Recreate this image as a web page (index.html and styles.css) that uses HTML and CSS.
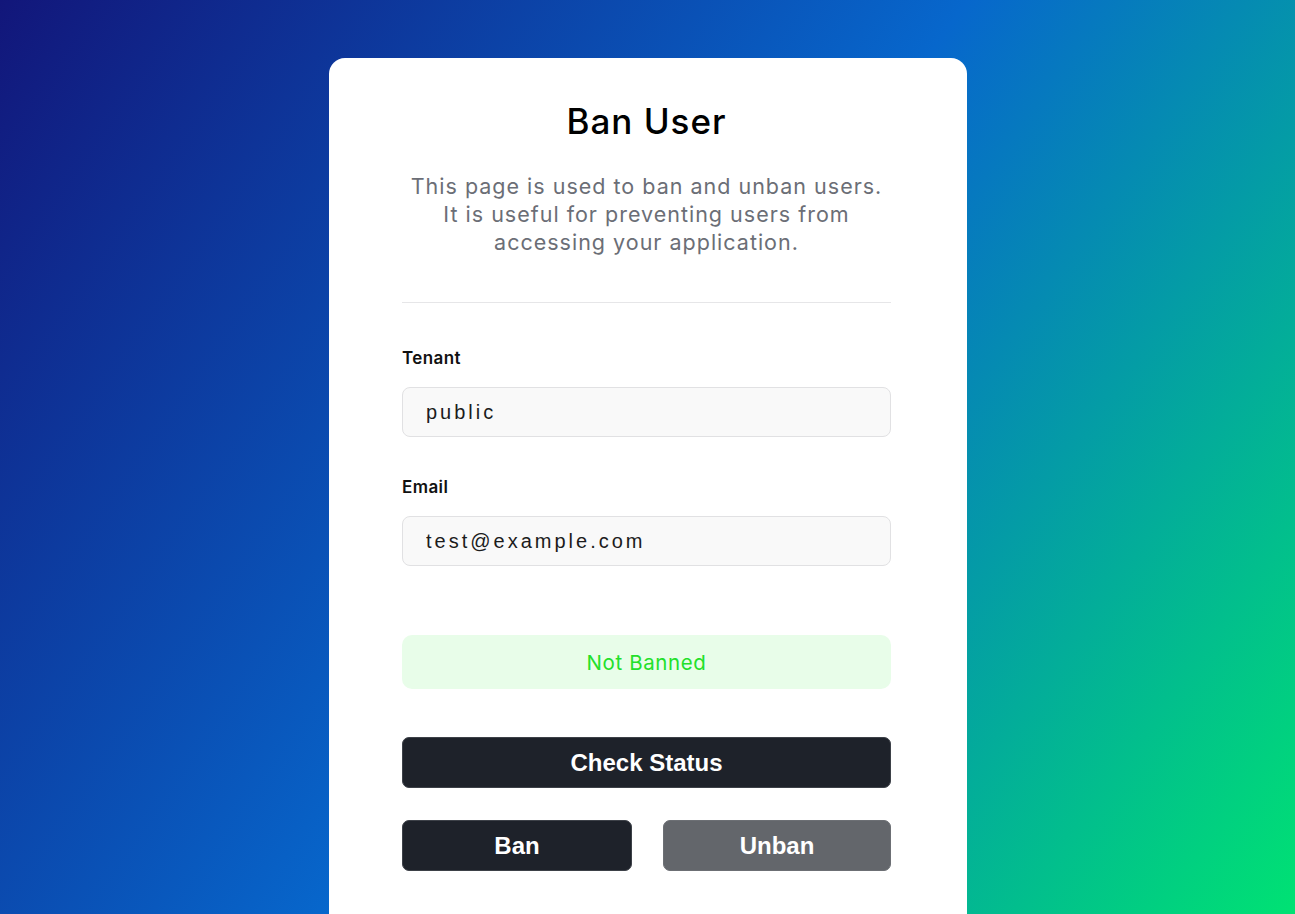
FILE: index.html
```html
<!DOCTYPE html>
<html lang="en">
<head>
<meta charset="utf-8">
<title>Ban User</title>
<link rel="stylesheet" href="styles.css">
</head>
<body>
<main class="page">
  <section class="card">
    <h1 class="title">Ban User</h1>
    <p class="desc">This page is used to ban and unban users.<br>It is useful for preventing users from<br>accessing your application.</p>
    <hr class="divider">
    <div class="field">
      <label class="label" for="tenant">Tenant</label>
      <input class="input" id="tenant" type="text" value="public">
    </div>
    <div class="field field-second">
      <label class="label" for="email">Email</label>
      <input class="input" id="email" type="text" value="test@example.com">
    </div>
    <div class="status">Not Banned</div>
    <button class="btn btn-dark btn-full">Check Status</button>
    <div class="actions">
      <button class="btn btn-dark">Ban</button>
      <button class="btn btn-gray">Unban</button>
    </div>
  </section>
</main>
</body>
</html>
```
FILE: styles.css
```css
* { box-sizing: border-box; }
html, body { margin: 0; height: 100%; }
body {
  background: linear-gradient(125deg, #12167a 0%, #0767cc 50%, #00e273 100%);
  font-family: "Inter", "Noto Sans", sans-serif;
  overflow: hidden;
}
.page {
  display: flex;
  justify-content: center;
  padding-top: 58px;
  padding-left: 1px;
}
.card {
  width: 638px;
  min-height: 900px;
  background: #fff;
  border-radius: 16px;
  padding: 43px 76px 0 73px;
  display: flex;
  flex-direction: column;
}
.title {
  margin: 0;
  font-size: 35px;
  line-height: 40px;
  letter-spacing: 1px;
  font-weight: 500;
  text-align: center;
  color: #000;
}
.desc {
  margin: 31px 0 0;
  font-size: 21.5px;
  line-height: 28px;
  letter-spacing: 1px;
  text-align: center;
  color: #6b6e76;
  font-weight: 400;
}
.divider {
  margin: 46px 0 0;
  border: 0;
  border-top: 1px solid #e6e6e8;
  height: 0;
}
.field {
  display: flex;
  flex-direction: column;
  margin-top: 45px;
}
.field-second { margin-top: 40px; }
.label {
  font-size: 17px;
  line-height: 20px;
  letter-spacing: 0.4px;
  font-weight: 600;
  color: #111;
  margin-bottom: 19px;
}
.input {
  height: 50px;
  border: 1.5px solid #e1e1e3;
  border-radius: 8px;
  background: #f9f9f9;
  padding: 0 23px;
  font-family: "Liberation Sans", Arial, sans-serif;
  font-size: 20px;
  letter-spacing: 3px;
  color: #1c1c1c;
  outline: none;
}
.status {
  margin-top: 69px;
  height: 54px;
  border-radius: 10px;
  background: #e8fde9;
  color: #22e02a;
  font-size: 20.5px;
  letter-spacing: 0.6px;
  display: flex;
  align-items: center;
  justify-content: center;
}
.btn {
  height: 51px;
  border-radius: 7px;
  border: 1px solid #3d4148;
  font-family: "Liberation Sans", Arial, sans-serif;
  font-weight: 700;
  font-size: 24px;
  color: #fff;
  cursor: pointer;
}
.btn-dark { background: #1e222a; }
.btn-gray { background: #63666b; border-color: #6c6f74; }
.btn-full { margin-top: 48px; width: 100%; }
.actions {
  margin-top: 32px;
  display: grid;
  grid-template-columns: 230px 228px;
  justify-content: space-between;
}
```
